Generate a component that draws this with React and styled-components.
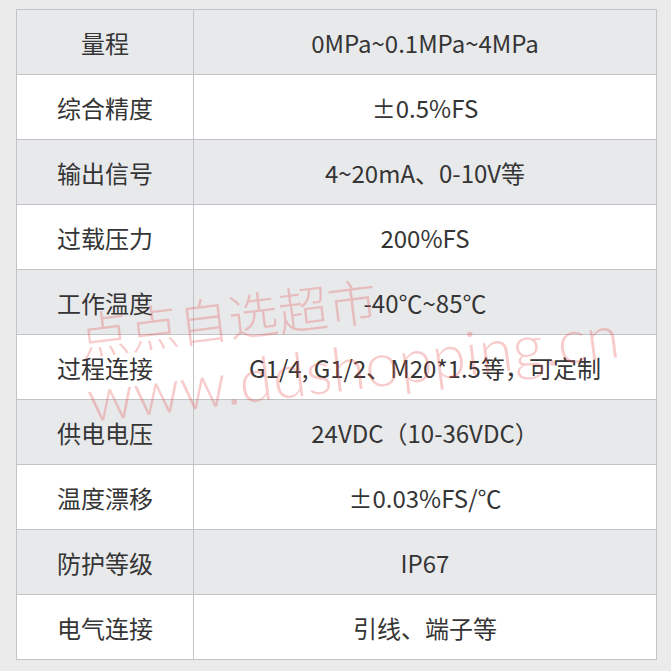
import React from 'react'
import styled, { createGlobalStyle } from 'styled-components'

const GlobalStyle = createGlobalStyle`
    html, body {
        margin: 0;
        padding: 0;
        background: #ebebeb;
    }
    body {
        font-family: "Noto Sans CJK SC", "Noto Sans", sans-serif;
    }
`

const Page = styled.div`
    position: relative;
    width: 671px;
    height: 671px;
    padding: 9px 0 0 16px;
    box-sizing: border-box;
    overflow: hidden;
`

const Table = styled.div`
    display: grid;
    grid-template-columns: 177px 463px;
    width: 641px;
    border-top: 1px solid #c3c4c7;
    border-left: 1px solid #c3c4c7;
    box-sizing: border-box;
`

const Cell = styled.div`
    height: 65px;
    box-sizing: border-box;
    border-right: 1px solid #c3c4c7;
    border-bottom: 1px solid #c3c4c7;
    background: ${p => (p.$shaded ? '#e8e9eb' : '#ffffff')};
    display: flex;
    align-items: center;
    justify-content: center;
    font-size: 24px;
    color: #353535;
    white-space: nowrap;
`

const Watermark = styled.div`
    position: absolute;
    left: 76px;
    top: 309px;
    transform: rotate(-7deg);
    transform-origin: 0 0;
    pointer-events: none;
    color: rgba(228, 66, 66, 0.27);
    display: flex;
    flex-direction: column;
`

const MarkCn = styled.div`
    font-family: "Noto Sans CJK SC", sans-serif;
    font-weight: 300;
    font-size: 50px;
    line-height: 50px;
`

const MarkEn = styled.div`
    font-family: "Lato", "Liberation Sans", sans-serif;
    font-weight: 300;
    font-size: 61px;
    line-height: 61px;
    margin-top: 10px;
`

const rows = [
    ['量程', '0MPa~0.1MPa~4MPa'],
    ['综合精度', '±0.5%FS'],
    ['输出信号', '4~20mA、0-10V等'],
    ['过载压力', '200%FS'],
    ['工作温度', '-40℃~85℃'],
    ['过程连接', 'G1/4, G1/2、M20*1.5等，可定制'],
    ['供电电压', '24VDC（10-36VDC）'],
    ['温度漂移', '±0.03%FS/℃'],
    ['防护等级', 'IP67'],
    ['电气连接', '引线、端子等'],
]

export default function App() {
    return (
        <Page>
            <GlobalStyle />
            <Table>
                {rows.map(([name, value], i) => (
                    <React.Fragment key={name}>
                        <Cell $shaded={i % 2 === 0}>{name}</Cell>
                        <Cell $shaded={i % 2 === 0}>{value}</Cell>
                    </React.Fragment>
                ))}
            </Table>
            <Watermark>
                <MarkCn>点点自选超市</MarkCn>
                <MarkEn>www.ddshopping.cn</MarkEn>
            </Watermark>
        </Page>
    )
}
